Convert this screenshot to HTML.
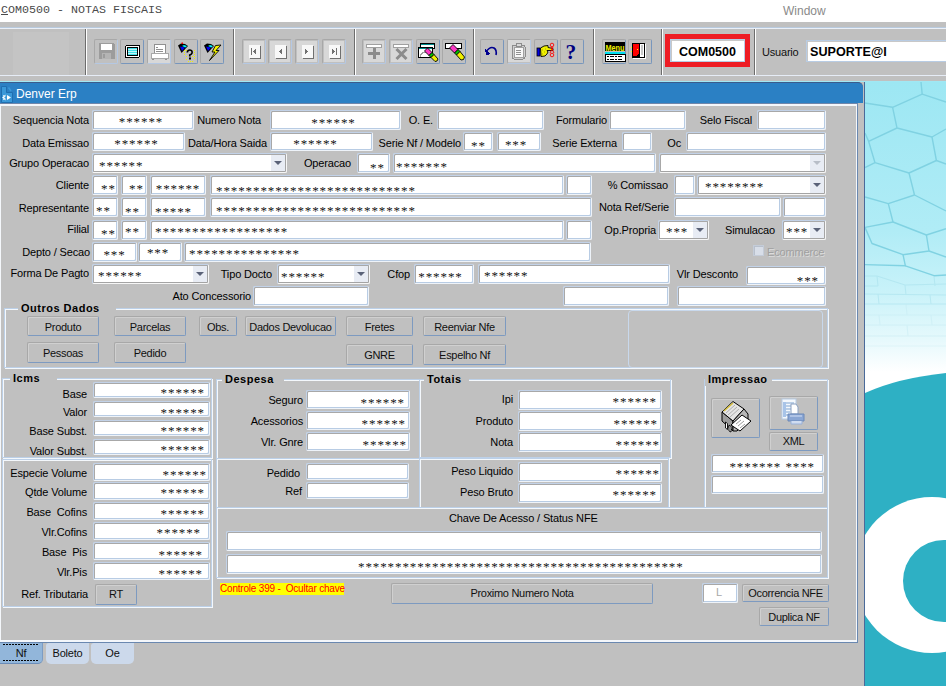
<!DOCTYPE html>
<html><head><meta charset="utf-8">
<style>
*{margin:0;padding:0;box-sizing:border-box}
html,body{width:946px;height:686px;overflow:hidden;background:#c0c0c0;font-family:"Liberation Sans",sans-serif;font-size:11px;color:#000}
.abs{position:absolute}
#title{position:absolute;left:0;top:0;width:946px;height:22px;background:#fff}
#title .t{position:absolute;left:1px;top:3px;font:11.67px/14px "Liberation Mono",monospace;color:#4a4a4a}
#title .w{position:absolute;left:783px;top:4px;font:12px/14px "Liberation Sans",sans-serif;color:#8a8a8a}
#tb{position:absolute;left:0;top:22px;width:946px;height:60px;background:#c0c0c0}
.hl{position:absolute;left:0;width:946px;height:1px}
.sep{position:absolute;top:29px;width:2px;height:46px;border-left:1px solid #6c6c6c;border-right:1px solid #fff}
.tbb{position:absolute;top:39px;width:24px;height:25px;border:1px solid;border-color:#a8a8a8 #7896bc #7896bc #a8a8a8;border-radius:2px;background:#c0c0c0}
.tbb.dis{border-color:#a8a8a8 #b4c8e4 #b4c8e4 #a8a8a8}
#win{position:absolute;left:0;top:82px;width:865px;height:604px;background:#c0c0c0;border-right:1px solid #4a6a9a}
#cap{position:absolute;left:0;top:82px;width:863px;height:21px;background:#2b80c4;border-top:1px solid #3c5c8c;border-top-right-radius:5px}
#cap .t{position:absolute;left:16px;top:4px;font:12px/15px "Liberation Sans",sans-serif;color:#fff}
#panel{position:absolute;left:0;top:103px;width:858px;height:540px;border:1px solid;border-color:#fff #6a88b0 #6a88b0 #fff;box-shadow:inset -1px -1px 0 #f4f7fb,inset 0 -2px 0 #f4f7fb;border-top-right-radius:3px}
.f{position:absolute;background:#fff;border:1px solid;border-color:#c2d2e8 #eef3f9 #eef3f9 #c2d2e8;box-shadow:inset 1px 1px 0 #a8a8a8,inset -1px -1px 0 #b8cce4;border-radius:2px;overflow:hidden}
.f.dis{background:#fff}
.ast{position:absolute;font:13px "Liberation Serif",serif;color:#111;white-space:pre;letter-spacing:0.9px}
.dd{position:absolute;right:1px;top:1px;bottom:1px;width:14px;background:#e8ecf4}
.dd:after{content:"";position:absolute;left:3px;top:6px;border-left:4px solid transparent;border-right:4px solid transparent;border-top:4px solid #5a6278}
.f.ddf{border-color:#c2d2e8 #f6f6f6 #f6f6f6 #c2d2e8;box-shadow:inset 1px 1px 0 #a8a8a8,inset -1px -1px 0 #a4a4a4}
.f.dis .dd:after{border-top-color:#b8bec8}
.l{position:absolute;white-space:nowrap;letter-spacing:-0.15px;color:#000}
.disl{color:#a0a0a0;text-shadow:1px 1px 0 #dcdcdc}
.cb{position:absolute;width:11px;height:11px;background:#d8dee8;border:1px solid #c4ccd8;box-shadow:inset 1px 1px 0 #b8c0cc}
.b{position:absolute;text-align:center;white-space:nowrap;letter-spacing:-0.3px;background:#c0c0c0;border:1px solid;border-color:#a8a8a8 #7d9ac0 #7d9ac0 #a8a8a8;box-shadow:inset 1px 1px 0 #d0d0d0;border-radius:2px;color:#101010}
.b.ib svg{position:absolute;left:50%;top:50%;transform:translate(-50%,-50%)}
.fr{position:absolute;border:1px solid #bcd0e8;box-shadow:inset 1px 1px 0 #f4f8fc,1px 1px 0 #f4f8fc}
.fr2{position:absolute;border:1px solid #c8d8ec;border-radius:4px}
.frt{position:absolute;background:#c0c0c0;font:bold 11px/14px "Liberation Sans",sans-serif;letter-spacing:0.5px;color:#000;padding-left:3px;white-space:nowrap}
.warn{position:absolute;background:#ffff00;color:#ff0000;font:10px/12.5px "Liberation Sans",sans-serif;letter-spacing:-0.2px;white-space:nowrap}
.tab{position:absolute;top:643px;height:21px;text-align:center;font:11px/21px "Liberation Sans",sans-serif;letter-spacing:-0.2px;border-radius:0 0 5px 5px;color:#101010}
</style></head><body>
<div id="title"><div class="t"><span style="text-decoration:underline">C</span>OM0500 - NOTAS FISCAIS</div><div class="w">Window</div></div>
<div id="tb"></div>
<div class="hl" style="top:27px;background:#b8cade"></div>
<div class="hl" style="top:28px;background:#eaeff7"></div>
<div class="hl" style="top:75px;background:#e6ecf6"></div>
<div class="hl" style="top:81px;background:#a0e8f4"></div>
<div class="abs" style="left:13px;top:32px;width:56px;height:43px;background:#c4c4c4"></div>
<div class="sep" style="left:85px"></div>
<div class="sep" style="left:233px"></div>
<div class="sep" style="left:354px"></div>
<div class="sep" style="left:473px"></div>
<div class="sep" style="left:593px"></div>
<div class="sep" style="left:661px"></div>
<div class="sep" style="left:754px"></div>
<div class="tbb dis" style="left:94px"></div>
<div class="tbb" style="left:120px"></div>
<div class="tbb dis" style="left:147px"></div>
<div class="tbb" style="left:174px"></div>
<div class="tbb" style="left:200px"></div>
<div class="tbb dis" style="left:242px"></div>
<div class="tbb dis" style="left:268px"></div>
<div class="tbb dis" style="left:295px"></div>
<div class="tbb dis" style="left:322px"></div>
<div class="tbb dis" style="left:362px"></div>
<div class="tbb dis" style="left:389px"></div>
<div class="tbb" style="left:416px"></div>
<div class="tbb" style="left:442px"></div>
<div class="tbb" style="left:480px"></div>
<div class="tbb dis" style="left:507px"></div>
<div class="tbb" style="left:534px"></div>
<div class="tbb" style="left:560px"></div>
<div class="tbb" style="left:602px"></div>
<div class="tbb" style="left:628px"></div>
<svg class="abs" style="left:0;top:0" width="700" height="80" viewBox="0 0 700 80" shape-rendering="crispEdges">
<!-- floppy -->
<path d="M99 43 H113 L115 45 V59 H99 Z" fill="#9c9c9c"/>
<rect x="101" y="44" width="11" height="6" fill="#fff"/>
<rect x="102" y="53" width="9" height="6" fill="#b4b4b4"/>
<rect x="103" y="54" width="2" height="4" fill="#9c9c9c"/>
<!-- window -->
<rect x="125" y="45" width="15" height="13" rx="2" fill="#000"/>
<rect x="126" y="46" width="13" height="11" fill="#fff"/>
<rect x="127" y="47" width="11" height="9" fill="#000"/>
<rect x="128" y="48" width="9" height="7" fill="#40e0e8"/>
<path d="M128 49h9M128 51h9M128 53h9" stroke="#c0f4f8" stroke-width="1"/>
<!-- printer disabled -->
<rect x="148" y="40" width="22" height="23" fill="#d8d8d8"/>
<rect x="154" y="44" width="11" height="9" fill="#fff" stroke="#909090" stroke-width="1"/>
<path d="M156 47h2M156 49h7M156 51h7" stroke="#909090"/>
<rect x="151" y="53" width="17" height="5" fill="#fff" stroke="#a8a8a8"/>
<path d="M152 59h2M165 59h2" stroke="#909090"/>
<!-- funnel ? -->
<g shape-rendering="auto">
<path d="M178 45.5 L181.5 53 L188 46 L185 44 L181 43.5 Z" fill="#000"/>
<path d="M180 46.5 L182 51 L185 47.5 Z" fill="#0000f0"/>
<path d="M182 46 L185.5 47.5 L187 46 L184 45 Z" fill="#00f0ff"/>
<rect x="181.5" y="42.5" width="1.5" height="1.5" fill="#f00"/>
<g fill="#f0f000"><rect x="184" y="50" width="1" height="1"/><rect x="184" y="52" width="1" height="1"/><rect x="184" y="54" width="1" height="1"/><rect x="186" y="56" width="1" height="1"/><rect x="186" y="59" width="1" height="1"/><rect x="188" y="61" width="1" height="1"/><rect x="190" y="61" width="1" height="1"/><rect x="192" y="61" width="1" height="1"/><rect x="194" y="50" width="1" height="1"/><rect x="194" y="52" width="1" height="1"/><rect x="194" y="54" width="1" height="1"/><rect x="194" y="56" width="1" height="1"/><rect x="194" y="58" width="1" height="1"/><rect x="192" y="56" width="1" height="1"/><rect x="186" y="50" width="1" height="1"/></g>
<path d="M187.3 52.5 Q187.5 49.8 190 50 Q192.5 50.3 192 53 Q191.5 54.5 189.8 55 V56.5" fill="none" stroke="#000" stroke-width="1.7"/>
<rect x="189" y="57.5" width="2" height="2" fill="#000"/>
</g>
<!-- funnel lightning -->
<g shape-rendering="auto">
<path d="M204 45.5 L207.5 53 L214 46 L211 44 L207 43.5 Z" fill="#000"/>
<path d="M206 46.5 L208 51 L211 47.5 Z" fill="#0000f0"/>
<path d="M208 46 L211.5 47.5 L213 46 L210 45 Z" fill="#00f0ff"/>
<path d="M221 45 L215.5 45.5 L212 52 L215 52 L209.5 60.5 L219 50.5 L216 50.5 Z" fill="#f4f400" stroke="#000" stroke-width="0.9" stroke-linejoin="round"/>
</g>
<!-- nav -->
<g fill="#d8d8d8"><rect x="244" y="41" width="20" height="21"/><rect x="270" y="41" width="20" height="21"/><rect x="297" y="41" width="20" height="21"/><rect x="324" y="41" width="20" height="21"/></g>
<g fill="#f8f8f8"><rect x="249" y="45" width="11" height="13"/><rect x="275" y="45" width="11" height="13"/><rect x="302" y="45" width="11" height="13"/><rect x="329" y="45" width="11" height="13"/></g>
<g stroke="#707070" fill="none"><path d="M260 46 V58 H250"/><path d="M286 46 V58 H276"/><path d="M313 46 V58 H303"/><path d="M340 46 V58 H330"/></g>
<g fill="#707070"><rect x="251" y="48" width="1" height="7"/><path d="M253 51.5 L256 48 V55 Z"/><path d="M279 51.5 L282 48 V55 Z"/><path d="M308 51.5 L305 48 V55 Z"/><path d="M335 51.5 L332 48 V55 Z"/><rect x="336" y="48" width="1" height="7"/></g>
<!-- + x -->
<g fill="#d8d8d8"><rect x="364" y="41" width="20" height="21"/><rect x="391" y="41" width="20" height="21"/></g>
<g fill="#fff" stroke="#a0a0a0"><rect x="366.5" y="44.5" width="15" height="3"/><rect x="393.5" y="44.5" width="15" height="3"/></g>
<path d="M374 48 V59 M368 53.5 H380" stroke="#8c8c8c" stroke-width="3"/>
<path d="M396.5 49 L406.5 59 M406.5 49 L396.5 59" stroke="#8c8c8c" stroke-width="3" shape-rendering="auto"/>
<!-- window eraser -->
<rect x="420.5" y="43.5" width="14" height="5" fill="#fff" stroke="#000"/><rect x="421" y="44" width="13" height="1" fill="#008c8c"/>
<rect x="418.5" y="47.5" width="14" height="10" fill="#fff" stroke="#000"/><rect x="419" y="48" width="13" height="1" fill="#008c8c"/>
<path d="M420 57 Q421 52 426 52" fill="none" stroke="#a0a0a0"/>
<g shape-rendering="auto" stroke="#000" stroke-width="0.9" stroke-linejoin="round">
<path d="M424.5 51 L427.5 48 L432 52.5 L429 55.5 Z" fill="#ff38c8"/>
<path d="M429 55.5 L432 52.5 L434 54.5 L431 57.5 Z" fill="#00c000"/>
<path d="M431 57.5 L434 54.5 L438 59 L437 61 L435 61.5 Z" fill="#f0f000"/>
</g>
<!-- eraser -->
<rect x="445.5" y="43.5" width="16" height="5" fill="#fff" stroke="#000"/>
<g shape-rendering="auto" stroke="#000" stroke-width="0.9" stroke-linejoin="round">
<path d="M449.5 48 L453 44.5 L458 49.5 L454.5 53 Z" fill="#ff38c8"/>
<path d="M454.5 53 L458 49.5 L460 51.5 L456.5 55 Z" fill="#00c000"/>
<path d="M456.5 55 L460 51.5 L464.5 57 L463.5 59.5 L461 60 Z" fill="#f0f000"/>
</g>
<!-- undo -->
<path d="M486 52 Q490 46 494 48 Q497 50 496 55" fill="none" stroke="#000090" stroke-width="1.6" shape-rendering="auto"/>
<path d="M485 49 L486 55 L491 54 Z" fill="#000090"/>
<!-- clipboard -->
<rect x="508" y="40" width="22" height="22" fill="#d8d8d8"/>
<rect x="512" y="45" width="13" height="14" rx="2" fill="#d0d0d0" stroke="#8c8c8c"/>
<rect x="514" y="47" width="9" height="10" fill="#f8f8f8" stroke="#a0a0a0"/>
<rect x="516" y="43" width="5" height="3" fill="#d8d8d8" stroke="#8c8c8c"/>
<path d="M516 50h5M516 52h5M516 54h5" stroke="#909090"/>
<!-- hand -->
<g shape-rendering="auto">
<rect x="537" y="48" width="3" height="8" fill="#0000e0" stroke="#000" stroke-width="0.8"/>
<path d="M540.5 48 L544 46 L548 45.5 L548 47.5 L553 48.5 L553 50.5 L547 50.5 L548 52 L547 54 L545 56 L541 56.5 Z" fill="#f0f000" stroke="#000" stroke-width="0.9" stroke-linejoin="round"/>
<path d="M542 50 h1 M544 52 h1 M542 54 h1 M545 49 h1" stroke="#a0a000" stroke-width="0.8"/>
<circle cx="552" cy="45" r="1.8" fill="none" stroke="#f00" stroke-width="0.9"/>
<circle cx="552" cy="55" r="1.8" fill="none" stroke="#f00" stroke-width="0.9"/>
<path d="M551 47 L554 53 M553 47 L550 53" stroke="#f00" stroke-width="0.9"/>
</g>
<!-- ? -->
<text x="565.5" y="58.5" font-family="Liberation Serif" font-weight="bold" font-size="21.5" fill="#000080">?</text>
<!-- menu -->
<rect x="605" y="42" width="20" height="9" fill="#000"/>
<text x="605.5" y="50.5" font-family="Liberation Sans" font-weight="bold" font-size="9.5" fill="#f0f000" textLength="19" lengthAdjust="spacingAndGlyphs">Menu</text>
<rect x="605" y="52" width="20" height="2" fill="#00e0f0"/>
<rect x="605" y="54" width="20" height="7" fill="#fff" stroke="#000" stroke-width="1"/>
<path d="M607 56h2 M610 56h4 M615 56h2 M618 56h4 M607 59h2 M610 59h4 M615 59h2 M618 59h4" stroke="#000"/>
<!-- exit door -->
<rect x="632" y="43" width="13" height="15" fill="#000"/>
<rect x="640" y="44" width="4" height="13" fill="#fff"/>
<rect x="641" y="45" width="2" height="10" fill="#c8c8c8"/>
<rect x="645" y="44" width="1" height="15" fill="#fff"/><rect x="633" y="58" width="13" height="1" fill="#fff"/>
<path d="M633 44 H639 V54 L636 56 H633 Z" fill="#f00"/>
<rect x="637" y="49" width="1" height="1" fill="#ff0"/>
<rect x="631" y="47" width="1" height="1" fill="#ff0"/><rect x="631" y="51" width="1" height="1" fill="#ff0"/>
</svg>

<div class="abs" style="left:665px;top:34px;width:85px;height:33px;background:#ee1c24"></div>
<div class="abs" style="left:670px;top:39px;width:75px;height:23px;background:#fff;border:1px solid #b8cce4;box-shadow:inset 1px 1px 0 #c8c8c8;font:bold 12.5px/24px 'Liberation Sans',sans-serif;text-align:center;color:#000">COM0500</div>
<div class="abs" style="left:762px;top:45px;font:11px/14px 'Liberation Sans',sans-serif;letter-spacing:-0.2px;color:#101010">Usuario</div>
<div class="abs" style="left:806px;top:40px;width:150px;height:22px;background:#fff;border:1px solid #b8cce4;box-shadow:inset 1px 1px 0 #c8c8c8;font:bold 12.6px/22px 'Liberation Sans',sans-serif;padding-left:3px;color:#000">SUPORTE@I</div>

<svg class="abs" style="left:865px;top:82px" width="81" height="604" viewBox="865 82 81 604">
<defs><linearGradient id="g1" x1="0" y1="82" x2="0" y2="686" gradientUnits="userSpaceOnUse">
<stop offset="0" stop-color="#9de7f3"/><stop offset="0.245" stop-color="#b0ecf6"/><stop offset="0.344" stop-color="#c8f2f9"/><stop offset="0.427" stop-color="#e6f9fc"/><stop offset="0.48" stop-color="#ffffff"/><stop offset="1" stop-color="#ffffff"/></linearGradient></defs>
<rect x="865" y="82" width="81" height="604" fill="url(#g1)"/>
<g fill="none" stroke="#80d2e2" stroke-width="1.4" stroke-linejoin="round">
<path d="M865 103 L892.6 107.3 L922.2 94.2 L946 102"/><path d="M922.2 94.2 L921 82"/>
<path d="M892.6 107.3 L897 128 L932 137 L946 129"/><path d="M897 128 L868.6 141.3 L865 133"/>
<path d="M932 137 L936.4 160.5 L946 164"/><path d="M936.4 160.5 L909 173 L875 162.7 L868.6 141.3"/><path d="M875 162.7 L865 167.5"/>
<path d="M909 173 L914.5 195 L946 211"/><path d="M914.5 195 L888.3 203.6 L865 197"/>
<path d="M888.3 203.6 L893 222 L865 227.4"/><path d="M893 222 L926.4 235 L946 228.7"/>
<path d="M865 227.4 L872 243.5 L903 254.7 L929 251 L926.4 235"/><path d="M929 251 L946 257"/>
<path d="M903 254.7 L905.4 265.8 L865 264.6"/><path d="M905.4 265.8 L934 275.7 L946 275"/>
</g>
<g fill="none" stroke="#a6e0ec" stroke-width="1" opacity="0.55">
<path d="M865 276 L877 276 L905 285 L946 284"/><path d="M877 276 L878 286 L865 286"/><path d="M934 276 L935 286"/>
<path d="M865 294 L946 295"/><path d="M905 285 L906 295"/>
<path d="M865 304 L946 304"/><path d="M878 294 L879 304"/><path d="M930 295 L931 304"/>
</g>
<g fill="none" stroke="#c6ecf4" stroke-width="1" opacity="0.5">
<path d="M865 315 L946 315"/><path d="M906 304 L907 315"/>
<path d="M865 325 L946 325"/><path d="M879 315 L880 325"/><path d="M931 315 L932 325"/>
<path d="M865 336 L946 336"/><path d="M907 325 L908 336"/>
<path d="M865 346 L946 346" opacity="0.6"/>
</g>
<path d="M865 393 Q898 378 946 373 L946 686 L865 686 Z" fill="#2eb0c4"/>
<circle cx="932" cy="575" r="78" fill="#fff"/>
<circle cx="944" cy="581" r="41" fill="#2eb0c4"/>
</svg>

<div id="win"></div>
<div id="cap"><svg class="abs" style="left:0;top:2px" width="14" height="19" viewBox="0 0 14 19"><path d="M1.5 1.5 H6.5 V7.5 H12.5 V17.5 H1.5 Z" fill="#3a98d8" stroke="#1f6fb0"/><path d="M8.5 2.5 L11 6" stroke="#3a98d8" stroke-width="1.5"/><path d="M5.5 9.5 L4.5 10.5 L3 10 L3.5 11.5 L2 12.5 L3.5 13.5 L3 15 L4.5 14.5 L5.5 15.5 Z" fill="#fff"/><circle cx="5.3" cy="12.5" r="0.9" fill="#3a98d8"/><path d="M7 10 L11 12.5 L7 15 Z" fill="#fff"/></svg><div class="t">Denver Erp</div></div>
<div class="abs" style="left:0;top:103px;width:858px;height:1px;background:#6f86aa"></div>
<div class="abs" style="left:0;top:104px;width:857px;height:2px;background:#f4f7fb"></div>
<div class="abs" style="left:0;top:104px;width:1px;height:538px;background:#f4f7fb"></div>
<div class="abs" style="left:856px;top:104px;width:1px;height:538px;background:#f4f7fb"></div>
<div class="abs" style="left:857px;top:103px;width:1px;height:540px;background:#6a88b0"></div>
<div class="abs" style="left:0;top:640px;width:857px;height:2px;background:#f4f7fb"></div>
<div class="abs" style="left:0;top:642px;width:858px;height:1px;background:#6a88b0"></div>
<div class="l " style="right:857px;top:110px;line-height:20px">Sequencia Nota</div>
<div class="f " style="left:92px;top:110px;width:102px;height:20px"><span class="ast" style="left:0px;right:4px;text-align:center;top:2px;line-height:18px">******</span></div>
<div class="l " style="right:685px;top:110px;line-height:20px">Numero Nota</div>
<div class="f " style="left:270px;top:110px;width:131px;height:20px"><span class="ast" style="left:0px;right:4px;text-align:center;top:3px;line-height:18px">******</span></div>
<div class="l " style="right:513px;top:110px;line-height:20px">O. E.</div>
<div class="f " style="left:437px;top:110px;width:107px;height:20px"></div>
<div class="l " style="right:339px;top:110px;line-height:20px">Formulario</div>
<div class="f " style="left:609px;top:110px;width:77px;height:20px"></div>
<div class="l " style="right:194px;top:110px;line-height:20px">Selo Fiscal</div>
<div class="f " style="left:757px;top:110px;width:69px;height:20px"></div>
<div class="l " style="right:857px;top:133px;line-height:20px">Data Emissao</div>
<div class="f " style="left:92px;top:132px;width:93px;height:19px"><span class="ast" style="left:0px;right:4px;text-align:center;top:2px;line-height:17px">******</span></div>
<div class="l " style="right:679px;top:133px;line-height:20px">Data/Hora Saida</div>
<div class="f " style="left:270px;top:132px;width:103px;height:19px"><span class="ast" style="left:-4px;right:8px;text-align:center;top:2px;line-height:17px">******</span></div>
<div class="l " style="right:485px;top:133px;line-height:20px">Serie Nf / Modelo</div>
<div class="f " style="left:463px;top:132px;width:30px;height:19px"><span class="ast" style="left:7px;top:4px;line-height:17px">**</span></div>
<div class="f " style="left:497px;top:132px;width:44px;height:19px"><span class="ast" style="left:-1px;right:5px;text-align:center;top:3px;line-height:17px">***</span></div>
<div class="l " style="right:329px;top:133px;line-height:20px">Serie Externa</div>
<div class="f " style="left:622px;top:132px;width:30px;height:19px"></div>
<div class="l " style="right:265px;top:133px;line-height:20px">Oc</div>
<div class="f " style="left:686px;top:132px;width:140px;height:19px"></div>
<div class="l " style="right:857px;top:153px;line-height:20px">Grupo Operacao</div>
<div class="f  ddf" style="left:92px;top:153px;width:195px;height:20px"><span class="ast" style="left:6px;top:2.5px;line-height:18px">******</span><i class="dd"></i></div>
<div class="l " style="right:595px;top:153px;line-height:20px">Operacao</div>
<div class="f " style="left:357px;top:153px;width:33px;height:20px"><span class="ast" style="left:12px;top:5px;line-height:18px">**</span></div>
<div class="f " style="left:393px;top:153px;width:263px;height:20px"><span class="ast" style="left:2px;top:4px;line-height:18px">*******</span></div>
<div class="f dis ddf" style="left:659px;top:153px;width:167px;height:20px"><i class="dd"></i></div>
<div class="l " style="right:857px;top:175px;line-height:20px">Cliente</div>
<div class="f " style="left:92px;top:175px;width:26px;height:20px"><span class="ast" style="left:8px;top:4px;line-height:18px">**</span></div>
<div class="f " style="left:121px;top:175px;width:26px;height:20px"><span class="ast" style="left:7px;top:4px;line-height:18px">**</span></div>
<div class="f " style="left:150px;top:175px;width:56px;height:20px"><span class="ast" style="left:2px;right:2px;text-align:center;top:4px;line-height:18px">******</span></div>
<div class="f " style="left:210px;top:175px;width:354px;height:20px"><span class="ast" style="left:5px;top:5.5px;line-height:18px">***************************</span></div>
<div class="f " style="left:566px;top:175px;width:26px;height:20px"></div>
<div class="l " style="right:278px;top:175px;line-height:20px">% Comissao</div>
<div class="f " style="left:674px;top:175px;width:21px;height:20px"></div>
<div class="f  ddf" style="left:697px;top:175px;width:129px;height:20px"><span class="ast" style="left:7px;top:2px;line-height:18px">********</span><i class="dd"></i></div>
<div class="l " style="right:857px;top:198px;line-height:20px">Representante</div>
<div class="f " style="left:92px;top:197px;width:26px;height:20px"><span class="ast" style="left:3px;top:4px;line-height:18px">**</span></div>
<div class="f " style="left:121px;top:197px;width:26px;height:20px"><span class="ast" style="left:3px;top:5px;line-height:18px">**</span></div>
<div class="f " style="left:150px;top:197px;width:56px;height:20px"><span class="ast" style="left:4px;top:5px;line-height:18px">*****</span></div>
<div class="f " style="left:210px;top:197px;width:382px;height:20px"><span class="ast" style="left:5px;top:3.5px;line-height:18px">***************************</span></div>
<div class="l " style="right:277px;top:197px;line-height:20px">Nota Ref/Serie</div>
<div class="f " style="left:674px;top:197px;width:107px;height:20px"></div>
<div class="f " style="left:783px;top:197px;width:43px;height:20px"></div>
<div class="l " style="right:857px;top:219px;line-height:20px">Filial</div>
<div class="f " style="left:92px;top:220px;width:26px;height:20px"><span class="ast" style="left:8px;top:4px;line-height:18px">**</span></div>
<div class="f " style="left:121px;top:220px;width:26px;height:20px"><span class="ast" style="left:3px;top:2px;line-height:18px">**</span></div>
<div class="f " style="left:150px;top:220px;width:414px;height:20px"><span class="ast" style="left:4px;top:2px;line-height:18px">******************</span></div>
<div class="f " style="left:566px;top:220px;width:26px;height:20px"></div>
<div class="l " style="right:290px;top:220px;line-height:20px">Op.Propria</div>
<div class="f  ddf" style="left:658px;top:220px;width:51px;height:20px"><span class="ast" style="left:7px;top:2px;line-height:18px">***</span><i class="dd"></i></div>
<div class="l " style="right:171px;top:220px;line-height:20px">Simulacao</div>
<div class="f  ddf" style="left:782px;top:220px;width:44px;height:20px"><span class="ast" style="left:3px;top:2px;line-height:18px">***</span><i class="dd"></i></div>
<div class="l " style="right:856px;top:242px;line-height:20px">Depto / Secao</div>
<div class="f " style="left:92px;top:242px;width:45px;height:20px"><span class="ast" style="left:2px;right:2px;text-align:center;top:3px;line-height:18px">***</span></div>
<div class="f " style="left:138px;top:242px;width:44px;height:20px"><span class="ast" style="left:0px;right:4px;text-align:center;top:1px;line-height:18px">***</span></div>
<div class="f " style="left:184px;top:242px;width:407px;height:20px"><span class="ast" style="left:4px;top:2px;line-height:18px">***************</span></div>
<div class="cb" style="left:753px;top:245px"></div>
<div class="l disl" style="left:767px;top:242px;line-height:20px">Ecommerce</div>
<div class="l " style="right:857px;top:263px;line-height:20px">Forma De Pagto</div>
<div class="f  ddf" style="left:92px;top:264px;width:117px;height:20px"><span class="ast" style="left:5px;top:2px;line-height:18px">******</span><i class="dd"></i></div>
<div class="l " style="right:674px;top:264px;line-height:20px">Tipo Docto</div>
<div class="f  ddf" style="left:277px;top:264px;width:93px;height:20px"><span class="ast" style="left:3px;top:3px;line-height:18px">******</span><i class="dd"></i></div>
<div class="l " style="right:536px;top:264px;line-height:20px">Cfop</div>
<div class="f " style="left:414px;top:264px;width:60px;height:20px"><span class="ast" style="left:-1.5px;right:5.5px;text-align:center;top:3px;line-height:18px">******</span></div>
<div class="f " style="left:478px;top:264px;width:192px;height:20px"><span class="ast" style="left:5px;top:2px;line-height:18px">******</span></div>
<div class="l " style="right:208px;top:264px;line-height:20px">Vlr Desconto</div>
<div class="f " style="left:746px;top:266px;width:80px;height:19px"><span class="ast" style="right:6px;top:4.5px;line-height:17px">***</span></div>
<div class="l " style="right:695px;top:286px;line-height:20px">Ato Concessorio</div>
<div class="f " style="left:253px;top:286px;width:116px;height:20px"></div>
<div class="f " style="left:563px;top:286px;width:106px;height:20px"></div>
<div class="f " style="left:677px;top:286px;width:149px;height:20px"></div>
<div class="fr " style="left:4px;top:308px;width:824px;height:60px"></div>
<div class="frt" style="left:18px;top:301px;width:98px">Outros Dados</div>
<div class="fr2" style="left:628px;top:310px;width:195px;height:58px"></div>
<div class="b " style="left:27px;top:316px;width:72px;height:20px;line-height:20px">Produto</div>
<div class="b " style="left:114px;top:316px;width:72px;height:20px;line-height:20px">Parcelas</div>
<div class="b " style="left:199px;top:316px;width:38px;height:20px;line-height:20px">Obs.</div>
<div class="b " style="left:245px;top:316px;width:91px;height:20px;line-height:20px">Dados Devolucao</div>
<div class="b " style="left:346px;top:316px;width:67px;height:20px;line-height:20px">Fretes</div>
<div class="b " style="left:423px;top:316px;width:83px;height:20px;line-height:20px">Reenviar Nfe</div>
<div class="b " style="left:27px;top:342px;width:72px;height:21px;line-height:21px">Pessoas</div>
<div class="b " style="left:114px;top:342px;width:72px;height:21px;line-height:21px">Pedido</div>
<div class="b " style="left:346px;top:344px;width:67px;height:21px;line-height:21px">GNRE</div>
<div class="b " style="left:423px;top:344px;width:83px;height:21px;line-height:21px">Espelho Nf</div>
<div class="fr " style="left:2px;top:378px;width:210px;height:80px"></div>
<div class="frt" style="left:10px;top:371px;width:47px">Icms</div>
<div class="l " style="right:859px;top:386px;line-height:17px">Base</div>
<div class="f " style="left:93px;top:382px;width:117px;height:16px"><span class="ast" style="right:4px;top:3px;line-height:14px">******</span></div>
<div class="l " style="right:859px;top:404px;line-height:17px">Valor</div>
<div class="f " style="left:93px;top:401px;width:117px;height:16px"><span class="ast" style="right:4px;top:4px;line-height:14px">******</span></div>
<div class="l " style="right:859px;top:423px;line-height:17px">Base Subst.</div>
<div class="f " style="left:93px;top:420px;width:117px;height:16px"><span class="ast" style="right:4px;top:3px;line-height:14px">******</span></div>
<div class="l " style="right:859px;top:443px;line-height:17px">Valor Subst.</div>
<div class="f " style="left:93px;top:439px;width:117px;height:16px"><span class="ast" style="right:4px;top:3px;line-height:14px">******</span></div>
<div class="fr " style="left:2px;top:459px;width:210px;height:148px"></div>
<div class="l " style="right:859px;top:465px;line-height:17px">Especie Volume</div>
<div class="f " style="left:93px;top:463px;width:117px;height:18px"><span class="ast" style="right:2px;top:3px;line-height:16px">******</span></div>
<div class="l " style="right:859px;top:484px;line-height:17px">Qtde Volume</div>
<div class="f " style="left:93px;top:482px;width:117px;height:18px"><span class="ast" style="right:4px;top:2px;line-height:16px">******</span></div>
<div class="l " style="right:859px;top:504px;line-height:17px">Base&nbsp; Cofins</div>
<div class="f " style="left:93px;top:502px;width:117px;height:18px"><span class="ast" style="right:4px;top:3px;line-height:16px">******</span></div>
<div class="l " style="right:859px;top:524px;line-height:17px">Vlr.Cofins</div>
<div class="f " style="left:93px;top:522px;width:117px;height:18px"><span class="ast" style="right:8px;top:2px;line-height:16px">******</span></div>
<div class="l " style="right:859px;top:544px;line-height:17px">Base&nbsp; Pis</div>
<div class="f " style="left:93px;top:542px;width:117px;height:18px"><span class="ast" style="right:6px;top:4px;line-height:16px">******</span></div>
<div class="l " style="right:859px;top:564px;line-height:17px">Vlr.Pis</div>
<div class="f " style="left:93px;top:562px;width:117px;height:18px"><span class="ast" style="right:6px;top:3px;line-height:16px">******</span></div>
<div class="l " style="right:858px;top:584px;line-height:20px">Ref. Tributaria</div>
<div class="b " style="left:95px;top:584px;width:42px;height:21px;line-height:19px">RT</div>
<div class="fr " style="left:216px;top:379px;width:204px;height:80px"></div>
<div class="frt" style="left:222px;top:372px;width:62px">Despesa</div>
<div class="l " style="right:643px;top:391px;line-height:19px">Seguro</div>
<div class="f " style="left:306px;top:390px;width:104px;height:19px"><span class="ast" style="right:4px;top:3px;line-height:17px">******</span></div>
<div class="l " style="right:643px;top:412px;line-height:19px">Acessorios</div>
<div class="f " style="left:306px;top:411px;width:104px;height:19px"><span class="ast" style="right:3px;top:3px;line-height:17px">******</span></div>
<div class="l " style="right:643px;top:433px;line-height:19px">Vlr. Gnre</div>
<div class="f " style="left:306px;top:432px;width:104px;height:19px"><span class="ast" style="right:2px;top:3px;line-height:17px">******</span></div>
<div class="fr " style="left:216px;top:458px;width:204px;height:50px"></div>
<div class="l " style="right:646px;top:465px;line-height:17px">Pedido</div>
<div class="f " style="left:306px;top:463px;width:103px;height:17px"></div>
<div class="l " style="right:644px;top:483px;line-height:17px">Ref</div>
<div class="f " style="left:306px;top:482px;width:103px;height:17px"></div>
<div class="fr " style="left:419px;top:379px;width:252px;height:79px"></div>
<div class="frt" style="left:424px;top:372px;width:45px">Totais</div>
<div class="l " style="right:433px;top:390px;line-height:19px">Ipi</div>
<div class="f " style="left:518px;top:390px;width:144px;height:20px"><span class="ast" style="right:4px;top:2px;line-height:18px">******</span></div>
<div class="l " style="right:433px;top:412px;line-height:19px">Produto</div>
<div class="f " style="left:518px;top:411px;width:144px;height:20px"><span class="ast" style="right:3px;top:3px;line-height:18px">******</span></div>
<div class="l " style="right:433px;top:433px;line-height:19px">Nota</div>
<div class="f " style="left:518px;top:432px;width:144px;height:20px"><span class="ast" style="right:1px;top:3px;line-height:18px">******</span></div>
<div class="fr " style="left:419px;top:458px;width:250px;height:50px"></div>
<div class="l " style="right:433px;top:462px;line-height:19px">Peso Liquido</div>
<div class="f " style="left:518px;top:462px;width:144px;height:20px"><span class="ast" style="right:1px;top:2px;line-height:18px">******</span></div>
<div class="l " style="right:433px;top:483px;line-height:19px">Peso Bruto</div>
<div class="f " style="left:518px;top:483px;width:144px;height:20px"><span class="ast" style="right:4px;top:1.5px;line-height:18px">******</span></div>
<div class="fr " style="left:704px;top:379px;width:124px;height:129px"></div>
<div class="frt" style="left:705px;top:372px;width:67px">Impressao</div>
<div class="b " style="left:711px;top:398px;width:49px;height:40px;line-height:38px"></div>
<div class="b " style="left:769px;top:396px;width:49px;height:34px;line-height:32px"></div>
<svg class="abs" style="left:700px;top:390px" width="130" height="50" viewBox="700 390 130 50">
<g stroke="#000" stroke-width="1" stroke-linejoin="round">
<path d="M722 412 L722 421 L733 431 L733 421 Z" fill="#9c9c9c"/>
<path d="M722 412 L733 401.5 L744 409 L733 421 Z" fill="#e4e4e4"/>
<path d="M733 421 L744 409 L748 414 L748 419 L737 431 L733 431 Z" fill="#b8b8b8"/>
<path d="M731 425 L742 415 L751 421 L740 431 Z" fill="#fff"/>
</g>
<path d="M724 411 L733 403" stroke="#d8c040" stroke-width="1.5"/>
<path d="M726 413 L735 405 M728 415 L737 407 M730 417 L739 409" stroke="#a0a0a0" stroke-width="0.8"/>
<path d="M736 424 L741 420 M738 426 L744 421 M740 428 L745 424" stroke="#808080" stroke-width="0.8"/>
<path d="M725.5 422 V428 L727.5 429.5 V423.5 Z M729 425 V431 L731 432 V426.5 Z" fill="#fff" stroke="#000" stroke-width="0.9"/>
<rect x="782" y="399" width="14" height="20" fill="#f4f8fc" stroke="#b8cce4"/>
<path d="M784 403 H794 M784 406 H794 M784 409 H792 M784 412 H790 M784 415 H790" stroke="#7fa4d0" stroke-width="1.2"/>
<rect x="783" y="402" width="3" height="15" fill="#a8c4e8"/>
<path d="M791 404 L796 404 L798 407 L798 414 L791 414 Z" fill="#fff" stroke="#8aa0c0"/>
<path d="M788 414 H804 V421 H788 Z" fill="#8aa6d4" stroke="#6a88b8"/>
<path d="M790 416 H802" stroke="#c8d8f0" stroke-width="1.2"/>
<path d="M791 421 V424 H802 V421" fill="#d0dcf0" stroke="#98b0d8"/>
</svg>
<div class="b " style="left:769px;top:432px;width:49px;height:19px;line-height:17px">XML</div>
<div class="f " style="left:711px;top:454px;width:113px;height:19px"><span class="ast" style="right:8px;top:3px;line-height:17px">******* ****</span></div>
<div class="f " style="left:711px;top:475px;width:113px;height:19px"></div>
<div class="fr " style="left:216px;top:507px;width:612px;height:71px"></div>
<div class="l " style="left:449px;top:509px;line-height:19px">Chave De Acesso / Status NFE</div>
<div class="f " style="left:226px;top:531px;width:596px;height:20px"></div>
<div class="f " style="left:226px;top:554px;width:596px;height:20px"><span class="ast" style="left:131px;top:3px;line-height:18px">********************************************</span></div>
<div class="warn" style="left:220px;top:583px;width:124px;height:12px">Controle 399 -&nbsp; Ocultar chave</div>
<div class="b " style="left:391px;top:583px;width:262px;height:21px;line-height:19px">Proximo Numero Nota</div>
<div class="f" style="left:702px;top:583px;width:36px;height:20px;text-align:center;color:#a8a8a8;font:11px/16px 'Liberation Sans',sans-serif;padding-right:2px">L</div>
<div class="b " style="left:742px;top:584px;width:87px;height:18px;line-height:16px">Ocorrencia NFE</div>
<div class="b " style="left:759px;top:607px;width:70px;height:19px;line-height:19px">Duplica NF</div>
<div class="tab" style="left:0;width:43px;background:#92b6da;border-bottom:1px solid #6a8cb8;border-right:1px solid #7c9cc4;border-radius:0 0 5px 0">Nf<div style="position:absolute;left:3px;width:36px;top:1px;height:1px;background:repeating-linear-gradient(90deg,#000 0 2px,transparent 2px 3px)"></div><div style="position:absolute;left:3px;width:36px;top:17px;height:1px;background:repeating-linear-gradient(90deg,#000 0 2px,transparent 2px 3px)"></div></div>
<div class="tab" style="left:46px;width:43px;background:#ccd9eb;border-top-left-radius:3px">Boleto</div>
<div class="tab" style="left:91px;width:43px;background:#ccd9eb;border-top-left-radius:3px">Oe</div>
</body></html>
